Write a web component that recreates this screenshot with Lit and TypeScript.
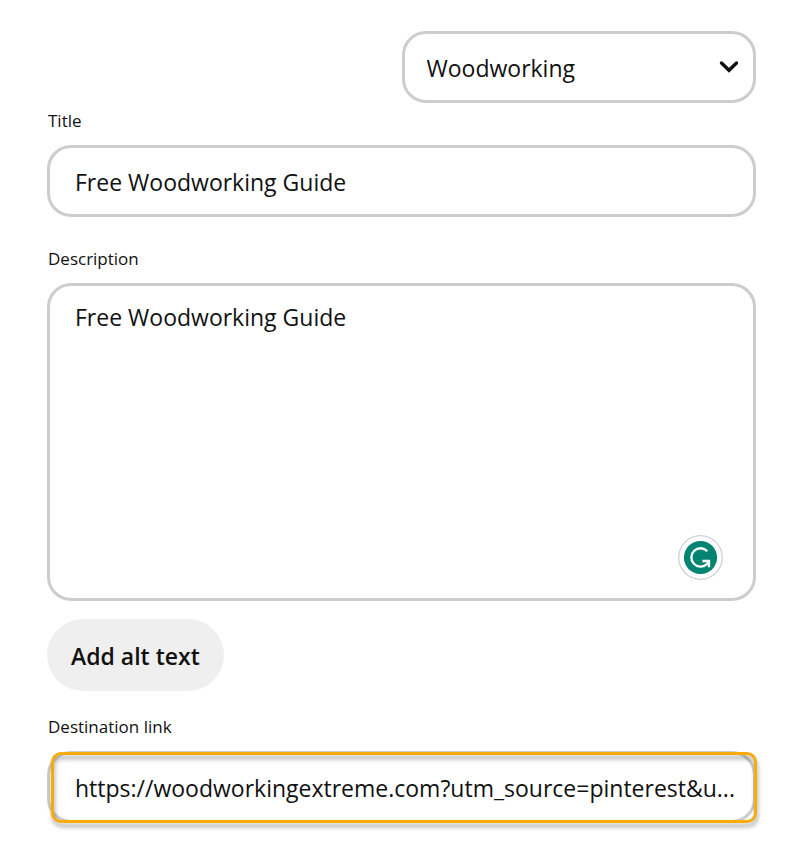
import { LitElement, html, css } from "lit";
import { customElement } from "lit/decorators.js";

@customElement("app-root")
export class AppRoot extends LitElement {
  static styles = css`
    :host {
      display: block;
      background: #fff;
      color: #111;
      font-family: "Open Sans", "Noto Sans", sans-serif;
    }
    * {
      box-sizing: border-box;
    }
    form {
      display: flex;
      flex-direction: column;
      padding: 31px 53px 32px 47px;
    }
    .board {
      position: relative;
      align-self: flex-end;
      width: 50%;
    }
    .control {
      display: block;
      width: 100%;
      height: 72px;
      margin: 0;
      padding: 2px 12px 0 25px;
      border: 3px solid #cdcdcd;
      border-radius: 24px;
      outline: none;
      background: #fff;
      color: inherit;
      font: inherit;
      font-size: 23px;
      line-height: 32px;
      text-overflow: ellipsis;
    }
    select.control {
      appearance: none;
      padding: 2px 48px 0 22px;
    }
    .chevron {
      position: absolute;
      top: 28px;
      right: 17px;
      width: 20px;
      height: 16px;
      pointer-events: none;
    }
    .field {
      display: flex;
      flex-direction: column;
      gap: 12px;
    }
    .title {
      margin-top: 6px;
    }
    .description {
      margin-top: 30px;
    }
    .link {
      margin-top: 24px;
    }
    label {
      align-self: flex-start;
      padding-left: 1px;
      font-size: 17px;
      line-height: 24px;
    }
    .box {
      position: relative;
    }
    textarea.control {
      height: 318px;
      padding-top: 15px;
      resize: none;
    }
    .grammar {
      position: absolute;
      right: 33px;
      bottom: 21px;
      width: 45px;
      height: 45px;
      padding: 0;
      border: 0;
      background: none;
    }
    .grammar svg {
      display: block;
    }
    .alt {
      align-self: flex-start;
      height: 72px;
      margin-top: 18px;
      padding: 2px 24px 0;
      border: 0;
      border-radius: 36px;
      background: #efefef;
      color: inherit;
      font: inherit;
      font-size: 23px;
      font-weight: 600;
    }
    .highlight {
      position: absolute;
      inset: 1px -1px 0 4px;
      border: 3px solid #f9ab0b;
      border-radius: 10px;
      filter: drop-shadow(1px 4px 2px rgba(0, 0, 0, 0.35));
      pointer-events: none;
    }
  `;

  render() {
    return html`
      <form>
        <div class="board">
          <select class="control" aria-label="Board">
            <option selected>Woodworking</option>
          </select>
          <svg class="chevron" viewBox="0 0 20 16" aria-hidden="true">
            <path d="M2.5 4 L10 11.3 L17.5 4" fill="none" stroke="#111" stroke-width="3.4" stroke-linecap="round" />
          </svg>
        </div>

        <div class="field title">
          <label for="title">Title</label>
          <input id="title" class="control" type="text" value="Free Woodworking Guide" />
        </div>

        <div class="field description">
          <label for="description">Description</label>
          <div class="box">
            <textarea id="description" class="control" spellcheck="false" .value=${"Free Woodworking Guide"}></textarea>
            <button class="grammar" type="button" aria-label="Check writing">
              <svg width="45" height="45" viewBox="0 0 45 45" aria-hidden="true">
                <circle cx="22.5" cy="22.5" r="21.8" fill="#fff" stroke="#cdd0dc" stroke-width="1.3" />
                <circle cx="22.5" cy="22.5" r="16.6" fill="#038472" />
                <g fill="none" stroke="#fff" stroke-width="2.3">
                  <path d="M29.3 16.2 A9.2 9.2 0 1 0 28.6 29.4 L31 26.2" />
                  <path d="M24.4 26 H31 V32.2" />
                </g>
              </svg>
            </button>
          </div>
        </div>

        <button class="alt" type="button">Add alt text</button>

        <div class="field link">
          <label for="link">Destination link</label>
          <div class="box">
            <input
              id="link"
              class="control"
              type="text"
              value="https://woodworkingextreme.com?utm_source=pinterest&amp;u..."
            />
            <div class="highlight"></div>
          </div>
        </div>
      </form>
    `;
  }
}
